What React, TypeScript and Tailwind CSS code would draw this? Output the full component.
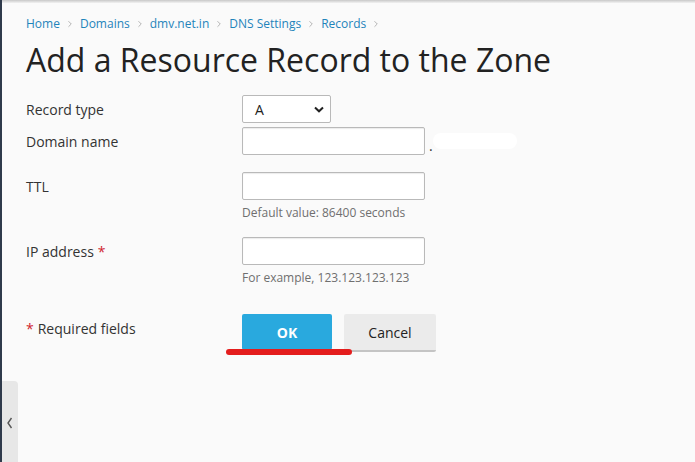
import { ChevronRight } from 'lucide-react'

const CRUMBS = ['Home', 'Domains', 'dmv.net.in', 'DNS Settings', 'Records']

function Label({ text, required }: { text: string; required?: boolean }) {
  return (
    <div className="w-[216px] h-[28px] flex items-center text-[14px] text-[#333]">
      {text}
      {required && <span className="text-[#d0252e] ml-1">*</span>}
    </div>
  )
}

function Input() {
  return <div className="w-[183px] h-[28px] bg-white border border-[#b9b9b9] rounded-[2px] shadow-[inset_0_1px_1px_rgba(0,0,0,0.08)]" />
}

export default function App() {
  return (
    <div className="w-full h-[462px] flex bg-[#fafafa] overflow-hidden" style={{ fontFamily: '"Open Sans", "Noto Sans", sans-serif' }}>
      <div className="w-[2px] bg-[#2f3a4b] shrink-0" />
      <main className="flex-1 relative">
        <div className="h-[3px] bg-gradient-to-b from-[#c8c8c8] to-[#f2f2f2]" />

        <div className="pl-6 pt-[12px]">
          {/* Breadcrumbs */}
          <nav className="flex items-center text-[12px] leading-[17px] text-[#1f84bb]">
            {CRUMBS.map(c => (
              <span key={c} className="flex items-center">
                <span>{c}</span>
                <ChevronRight className="w-[10px] h-[10px] text-[#8a8a8a] mx-[5px]" strokeWidth={1.5} />
              </span>
            ))}
          </nav>

          <h1 className="text-[32px] leading-[40px] text-[#222] mt-[8px]">
            Add a Resource Record to the Zone
          </h1>

          {/* Form */}
          <div className="mt-[15px]">
            <div className="flex">
              <Label text="Record type" />
              <div className="w-[89px] h-[28px] bg-white border border-[#b9b9b9] rounded-[2px] flex items-center justify-between pl-[12px] pr-[6px] text-[14px] text-[#222]">
                <span>A</span>
                <svg width="10" height="7" viewBox="0 0 10 7" className="text-[#222]">
                  <path d="M1 1.5 L5 5.3 L9 1.5" stroke="currentColor" strokeWidth="2" fill="none" />
                </svg>
              </div>
            </div>

            <div className="flex mt-[4px]">
              <Label text="Domain name" />
              <Input />
              <div className="flex items-center ml-[4px]">
                <span className="text-[14px] text-[#333] mt-[8px]">.</span>
                <div className="w-[84px] h-[16px] bg-white rounded-full mt-[-1px]" />
              </div>
            </div>

            <div className="flex mt-[16px]">
              <Label text="TTL" />
              <div>
                <Input />
                <p className="text-[12px] leading-[16px] text-[#6f6f6f] mt-[5px]">Default value: 86400 seconds</p>
              </div>
            </div>

            <div className="flex mt-[16px]">
              <Label text="IP address" required />
              <div>
                <Input />
                <p className="text-[12px] leading-[16px] text-[#6f6f6f] mt-[5px]">For example, 123.123.123.123</p>
              </div>
            </div>

            <div className="flex mt-[28px]">
              <div className="w-[216px] h-[28px] flex items-center text-[14px] text-[#333]">
                <span className="text-[#d0252e] mr-1">*</span>Required fields
              </div>
              <div className="relative flex gap-[12px]">
                <button className="w-[90px] h-[36px] bg-[#29a9de] text-white text-[14px] font-bold rounded-[2px]">OK</button>
                <button className="w-[92px] h-[38px] bg-[#ebebeb] text-[#222] text-[14px] rounded-[2px] border-b-2 border-[#c4c4c4]">Cancel</button>
                <div className="absolute left-[-16px] top-[35px] w-[126px] h-[6px] bg-[#e41d1d] rounded-full" />
              </div>
            </div>
          </div>
        </div>

        {/* Collapse tab */}
        <div className="absolute left-0 top-[381px] w-[16px] h-[90px] bg-[#e7e7e7] rounded-tr-[4px] flex items-start justify-center pt-[36px]">
          <svg width="8" height="12" viewBox="0 0 8 12" className="text-[#555]">
            <path d="M5.5 1 L2 6 L5.5 11" stroke="currentColor" strokeWidth="1.4" fill="none" />
          </svg>
        </div>
      </main>
    </div>
  )
}
